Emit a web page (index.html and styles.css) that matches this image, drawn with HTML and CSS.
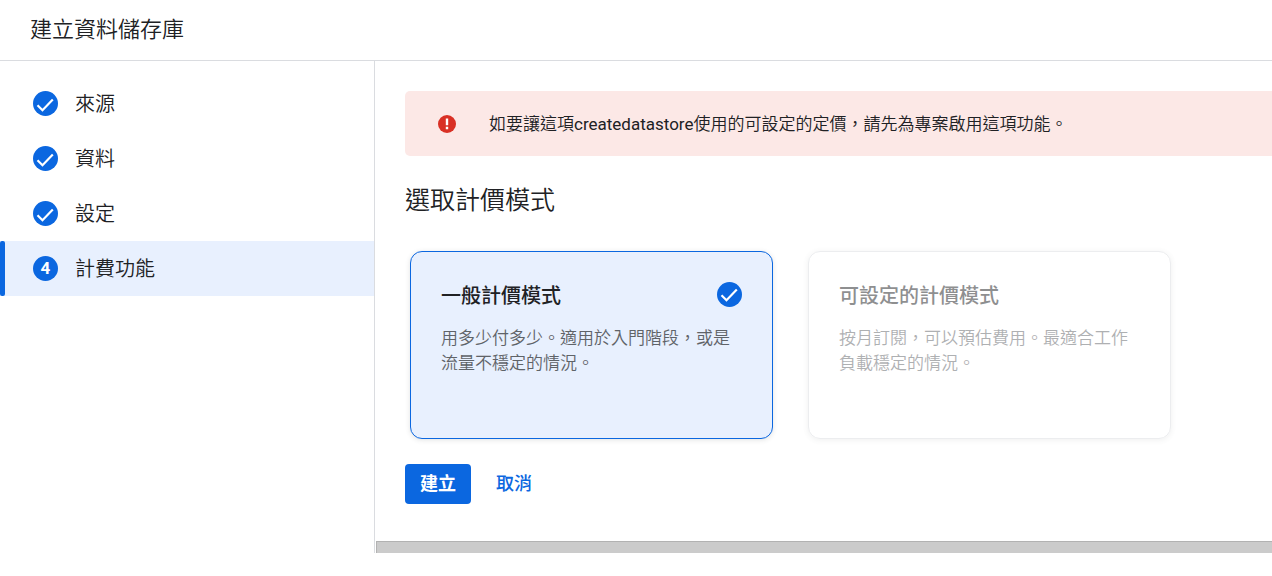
FILE: index.html
```html
<!DOCTYPE html>
<html lang="zh-Hant">
<head>
    <meta charset="UTF-8">
    <meta name="viewport" content="width=device-width, initial-scale=1.0">
    <title>建立資料儲存庫</title>
    <link rel="stylesheet" href="styles.css">
</head>
<body>
    <header class="header">
        <h1>建立資料儲存庫</h1>
    </header>

    <div class="layout">
        <!-- Steps -->
        <nav class="steps">
            <a href="#source" class="step">
                <svg class="check" viewBox="0 0 25 25" aria-hidden="true"><circle cx="12.5" cy="12.5" r="12.5"/><path d="M4.5 14.2l5 5L19.8 8.6"/></svg>
                <span>來源</span>
            </a>
            <a href="#data" class="step">
                <svg class="check" viewBox="0 0 25 25" aria-hidden="true"><circle cx="12.5" cy="12.5" r="12.5"/><path d="M4.5 14.2l5 5L19.8 8.6"/></svg>
                <span>資料</span>
            </a>
            <a href="#config" class="step">
                <svg class="check" viewBox="0 0 25 25" aria-hidden="true"><circle cx="12.5" cy="12.5" r="12.5"/><path d="M4.5 14.2l5 5L19.8 8.6"/></svg>
                <span>設定</span>
            </a>
            <a href="#billing" class="step active" aria-current="step">
                <span class="number">4</span>
                <span>計費功能</span>
            </a>
        </nav>

        <main class="main">
            <div class="content">
                <div class="alert" role="alert">
                    <svg class="alert-icon" viewBox="0 0 18 18" aria-hidden="true"><circle cx="9" cy="9" r="9"/><path d="M7.8 3.6h2.4v6.6H7.8zM7.8 11.8h2.4v2.4H7.8z"/></svg>
                    <span>如要讓這項createdatastore使用的可設定的定價，請先為專案啟用這項功能。</span>
                </div>

                <h2>選取計價模式</h2>

                <!-- Pricing models -->
                <div class="cards">
                    <label class="card selected">
                        <input type="radio" name="pricing" value="general" checked>
                        <span class="card-title">
                            一般計價模式
                            <svg class="check" viewBox="0 0 25 25" aria-hidden="true"><circle cx="12.5" cy="12.5" r="12.5"/><path d="M4.5 13.2l5 5L19.8 7.6"/></svg>
                        </span>
                        <span class="card-text">用多少付多少。適用於入門階段，或是流量不穩定的情況。</span>
                    </label>
                    <label class="card disabled">
                        <input type="radio" name="pricing" value="configurable" disabled>
                        <span class="card-title">可設定的計價模式</span>
                        <span class="card-text">按月訂閱，可以預估費用。最適合工作負載穩定的情況。</span>
                    </label>
                </div>

                <div class="actions">
                    <button type="button" class="btn primary">建立</button>
                    <button type="button" class="btn">取消</button>
                </div>
            </div>
            <div class="scroll-track"></div>
        </main>
    </div>
</body>
</html>
```
FILE: styles.css
```css
* {
    box-sizing: border-box;
}
body {
    margin: 0;
    background-color: #fff;
    color: #202124;
    font-family: Roboto, "Noto Sans CJK TC DemiLight", "Noto Sans CJK TC", sans-serif;
    font-size: 17px;
    line-height: 26px;
}
.header {
    padding: 15px 30px;
    border-bottom: 1px solid #dadce0;
}
h1 {
    margin: 0;
    font-size: 22px;
    font-weight: 400;
    line-height: 30px;
}
.layout {
    display: grid;
    grid-template-columns: 375px 1fr;
}
.steps {
    padding-top: 15px;
    border-right: 1px solid #dadce0;
}
.step {
    display: flex;
    align-items: center;
    gap: 17px;
    height: 55px;
    padding-left: 28px;
    border-left: 5px solid transparent;
    color: inherit;
    font-size: 20px;
    line-height: 28px;
    text-decoration: none;
}
.step.active {
    position: relative;
    background-color: #e8f0fe;
}
.step.active::before {
    content: "";
    position: absolute;
    top: 0;
    bottom: 0;
    left: -5px;
    width: 5px;
    border-radius: 2px;
    background-color: #0b67e0;
}
.check {
    flex: none;
    width: 25px;
    height: 25px;
    fill: #0b67e0;
}
.check path {
    fill: none;
    stroke: #fff;
    stroke-width: 2.2;
}
.number {
    width: 25px;
    height: 25px;
    border-radius: 50%;
    background-color: #0b67e0;
    color: #fff;
    font-size: 17px;
    font-weight: 700;
    line-height: 25px;
    text-align: center;
}
.main {
    min-width: 0;
    padding-left: 1px;
}
.content {
    padding: 30px 0 37px 29px;
}
.alert {
    display: flex;
    align-items: center;
    gap: 33px;
    min-height: 65px;
    padding: 15px 33px;
    border-radius: 5px 0 0 5px;
    background-color: #fce8e6;
}
.alert-icon {
    flex: none;
    width: 18px;
    height: 18px;
    fill: #d93025;
}
.alert-icon path {
    fill: #fff;
}
h2 {
    margin: 27px 0 33px;
    font-size: 25px;
    font-weight: 400;
    line-height: 35px;
}
.cards {
    display: flex;
    gap: 35px;
    padding: 0 5px;
}
.card {
    flex: 0 1 363px;
    min-height: 188px;
    padding: 30px;
    border: 1px solid #dadce0;
    border-radius: 12px;
    box-shadow: 0 1px 5px rgba(60, 64, 67, 0.15);
}
.card input {
    position: absolute;
    opacity: 0;
}
.card.selected {
    border-color: #0b67e0;
    background-color: #e8f0fe;
}
.card.disabled {
    opacity: 0.5;
}
.card-title {
    display: flex;
    justify-content: space-between;
    margin-bottom: 15px;
    font-family: Roboto, "Noto Sans CJK TC", sans-serif;
    font-size: 20px;
    font-weight: 500;
    line-height: 29px;
}
.card-text {
    display: block;
    color: #5f6368;
    line-height: 25px;
}
.actions {
    display: flex;
    gap: 10px;
    margin-top: 25px;
}
.btn {
    height: 40px;
    padding: 0 15px 5px;
    border: none;
    border-radius: 4px;
    background-color: transparent;
    color: #0b67e0;
    font-family: Roboto, "Noto Sans CJK TC", sans-serif;
    font-size: 18px;
    font-weight: 500;
    cursor: pointer;
}
.btn.primary {
    background-color: #0b67e0;
    color: #fff;
    font-weight: 700;
}
.scroll-track {
    height: 12px;
    border-top: 1px solid #b2b2b2;
    border-left: 1px solid #b2b2b2;
    background-color: #cbcbcb;
}
```
